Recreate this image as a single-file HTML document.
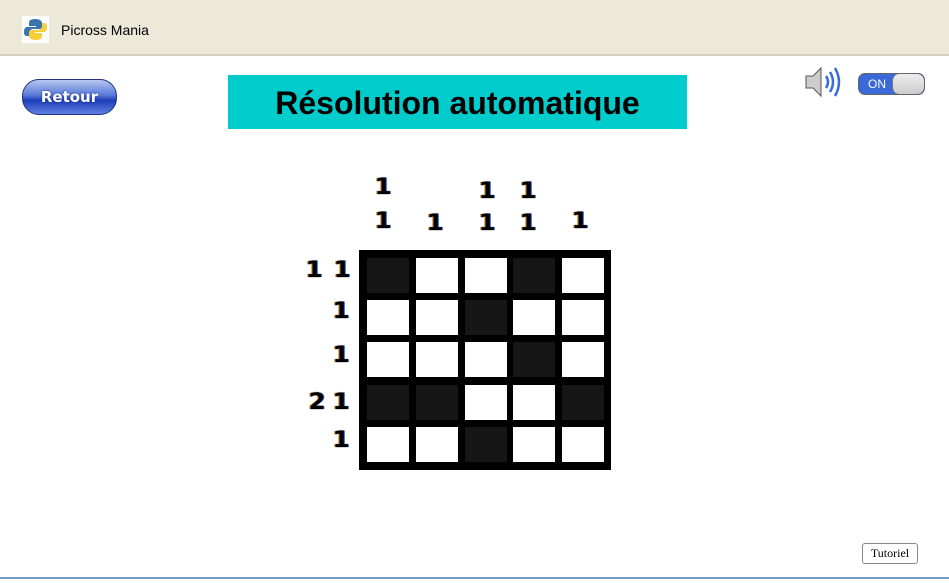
<!DOCTYPE html>
<html><head><meta charset="utf-8"><style>
body{margin:0;width:949px;height:583px;background:#fff;position:relative;overflow:hidden;font-family:"Liberation Sans",sans-serif}
.bar{position:absolute;left:0;top:0;width:949px;height:54px;background:#ECE9D8;border-bottom:2px solid #d6d2c2}
.a{position:absolute}
.cell{position:absolute;width:42px;height:35px;background:#fff}
.d{background:#161616}
.n{position:absolute;font:900 22px "DejaVu Sans",sans-serif;color:#000;transform:translateX(-50%) scaleX(1.1);text-shadow:-1px 0 #d88020,1px 0 #2060d0,0 0 1px #000}
</style></head><body>
<div class="bar"></div>
<div class="a" style="left:22px;top:16px;width:27px;height:27px;background:#fff">
<svg width="27" height="27" viewBox="0 0 27 27"><path d="M13 3c-5 0-6 2-6 4v3h7v1H5c-2 0-3 2-3 5s1 4 3 4h2v-3c0-2 2-4 4-4h6c2 0 3-1 3-3V7c0-2-2-4-7-4z" fill="#3a74ad"/><path d="M14 24c5 0 6-2 6-4v-3h-7v-1h9c2 0 3-2 3-5s-1-4-3-4h-2v3c0 2-2 4-4 4h-6c-2 0-3 1-3 3v3c0 2 2 4 7 4z" fill="#f7cf3c"/></svg></div>
<div class="a" style="left:61px;top:22px;font-size:14px;color:#000">Picross Mania</div>
<div class="a" style="left:22px;top:79px;width:93px;height:34px;border-radius:17px;background:linear-gradient(#b8c8f0 0%,#5878d8 45%,#1c3cb8 60%,#6080e0 100%);border:1px solid #203080;color:#fff;font:bold 15px 'DejaVu Sans',sans-serif;text-align:center;line-height:34px;text-shadow:0 0 2px #203080">Retour</div>
<div class="a" style="left:228px;top:75px;width:459px;height:54px;background:#00CCCC;text-align:center;font:bold 32px 'Liberation Sans',sans-serif;line-height:56px;color:#000">Résolution automatique</div>
<svg class="a" style="left:804px;top:63px" width="42" height="38" viewBox="0 0 42 38"><path d="M2 13h7l8-8v28l-8-8H2z" fill="#ccc" stroke="#555"/><path d="M22 13q4 6 0 12M26 9q6 10 0 20M31 5q8 14 0 28" fill="none" stroke="#3a6ae0" stroke-width="2.5"/></svg>
<div class="a" style="left:858px;top:73px;width:65px;height:20px;border-radius:7px;background:#3a6ad8;border:1px solid #666"></div>
<div class="a" style="left:868px;top:77px;color:#fff;font-size:12px">ON</div>
<div class="a" style="left:892px;top:74px;width:31px;height:20px;border-radius:7px;background:linear-gradient(#eee,#ccc);border-left:1px solid #777"></div>
<div class="a" style="left:359px;top:250px;width:252px;height:220px;background:#000"></div>
<div class="cell d" style="left:367px;top:258px"></div><div class="cell" style="left:416px;top:258px"></div><div class="cell" style="left:465px;top:258px"></div><div class="cell d" style="left:513px;top:258px"></div><div class="cell" style="left:562px;top:258px"></div>
<div class="cell" style="left:367px;top:300px"></div><div class="cell" style="left:416px;top:300px"></div><div class="cell d" style="left:465px;top:300px"></div><div class="cell" style="left:513px;top:300px"></div><div class="cell" style="left:562px;top:300px"></div>
<div class="cell" style="left:367px;top:342px"></div><div class="cell" style="left:416px;top:342px"></div><div class="cell" style="left:465px;top:342px"></div><div class="cell d" style="left:513px;top:342px"></div><div class="cell" style="left:562px;top:342px"></div>
<div class="cell d" style="left:367px;top:385px"></div><div class="cell d" style="left:416px;top:385px"></div><div class="cell" style="left:465px;top:385px"></div><div class="cell" style="left:513px;top:385px"></div><div class="cell d" style="left:562px;top:385px"></div>
<div class="cell" style="left:367px;top:427px"></div><div class="cell" style="left:416px;top:427px"></div><div class="cell d" style="left:465px;top:427px"></div><div class="cell" style="left:513px;top:427px"></div><div class="cell" style="left:562px;top:427px"></div>
<div class="n" style="left:383px;top:175px">1</div><div class="n" style="left:487px;top:179px">1</div><div class="n" style="left:528px;top:179px">1</div>
<div class="n" style="left:383px;top:209px">1</div><div class="n" style="left:435px;top:211px">1</div><div class="n" style="left:487px;top:211px">1</div><div class="n" style="left:528px;top:211px">1</div><div class="n" style="left:580px;top:209px">1</div>
<div class="n" style="left:314px;top:258px">1</div><div class="n" style="left:342px;top:258px">1</div>
<div class="n" style="left:341px;top:299px">1</div>
<div class="n" style="left:341px;top:343px">1</div>
<div class="n" style="left:317px;top:390px">2</div><div class="n" style="left:341px;top:390px">1</div>
<div class="n" style="left:341px;top:428px">1</div>
<div class="a" style="left:862px;top:543px;width:54px;height:19px;border:1px solid #888;border-radius:3px;font:12px 'Liberation Serif',serif;text-align:center;line-height:19px;background:#fff">Tutoriel</div>
<div class="a" style="left:0;top:577px;width:949px;height:2px;background:#7a9cc0"></div>
</body></html>
